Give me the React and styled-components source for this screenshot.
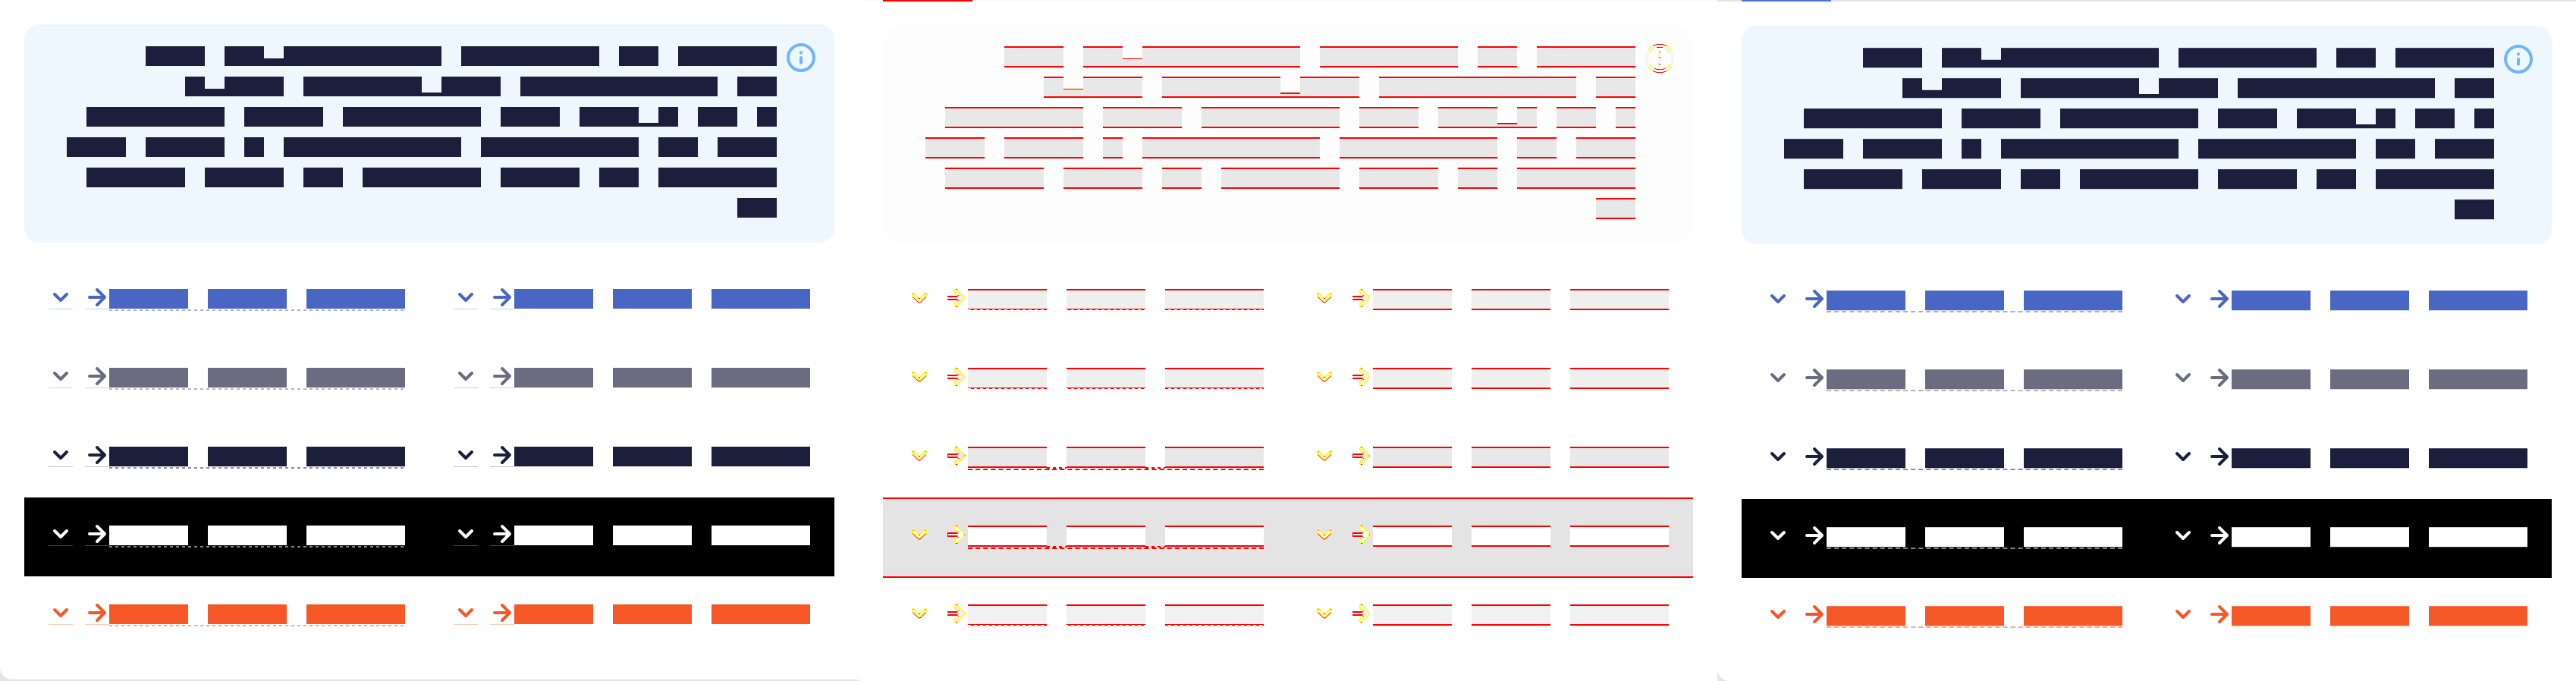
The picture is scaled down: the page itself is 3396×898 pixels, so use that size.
import React from "react";
import styled, { createGlobalStyle, css } from "styled-components";

const Base = createGlobalStyle`
  body { margin: 0; background: #ffffff; font-family: "Liberation Sans", sans-serif; }
`;

const Page = styled.main`
  display: grid;
  grid-template-columns: repeat(3, 1fr);
`;

const Pane = styled.section`
  background: ${(p) => (p.$kind === "diff" ? "#fbfbfb" : "#e4e4e4")};
`;

const TopLine = styled.div`
  height: 2px;
  padding-left: 32px;
  background: ${(p) => (p.$kind === "before" ? "#ffffff" : "transparent")};
`;

const Progress = styled.div`
  width: 118px;
  height: 2px;
  background: ${(p) => ({ before: "transparent", diff: "#ff0000", after: "#536dcf" })[p.$kind]};
`;

const Sheet = styled.div`
  background: #ffffff;
  padding: ${(p) => (p.$kind === "before" ? 30 : 32)}px 32px 32px;
  border-bottom-left-radius: 16px;
`;

const Notice = styled.div`
  display: flex;
  justify-content: flex-end;
  align-items: flex-start;
  gap: 12px;
  min-height: 240px;
  padding: 24px;
  margin-bottom: 24px;
  border-radius: 20px;
  background: ${(p) => (p.$kind === "diff" ? "#fdfdfd" : "#eef6fe")};
`;

const Lines = styled.div`
  display: flex;
  flex-direction: column;
  align-items: flex-end;
  gap: ${(p) => ({ before: 14, diff: 12, after: 13 })[p.$kind]}px;
  padding-top: ${(p) => (p.$kind === "diff" ? 3 : 5)}px;
`;

const Line = styled.div`
  display: flex;
  align-items: flex-end;
`;

const edge = {
  before: css``,
  diff: css`
    border: solid #ff0000;
    border-width: 2px 0;
  `,
  after: css`
    border: solid ${(p) => p.$c.bottom};
    border-width: 0 0 1px;
    box-shadow: inset 0 1px ${(p) => p.$c.top};
  `,
};

const Block = styled.span`
  box-sizing: border-box;
  width: ${(p) => p.$n * 26}px;
  height: ${(p) => p.$h + { before: 0, diff: 2, after: 1 }[p.$kind]}px;
  background: ${(p) => p.$c.fill};
  ${(p) => edge[p.$kind]}
  ${(p) =>
    p.$kind === "diff" &&
    p.$h === 10 &&
    css`
      border-top-width: 1px;
      box-shadow: inset 0 1px #ffff00;
    `}
  ${(p) =>
    p.$kind === "after" &&
    p.$h < 26 &&
    css`
      box-shadow: ${p.$h === 10 ? `0 -1px ${p.$c.bottom}` : "none"};
    `}
`;

const Space = styled.span`
  width: 26px;
  height: 2px;
  margin-bottom: -1px;
  background: ${(p) =>
    p.$dashed ? "repeating-linear-gradient(90deg, #ff0000 0 4px, transparent 4px 8px)" : "transparent"};
`;

const Row = styled.div`
  display: grid;
  grid-template-columns: 1fr 1fr;
  min-height: 104px;
  box-sizing: border-box;
  background: ${(p) => p.$bg || "transparent"};
  ${(p) =>
    p.$bg === "#e4e4e4" &&
    css`
      box-shadow: 0 -2px #ff0000, inset 0 -2px #ff0000;
    `}
`;

const Item = styled.div`
  display: flex;
  align-items: flex-start;
  padding: ${(p) => (p.$kind === "diff" ? 35 : 37)}px 0 0 32px;
`;

const IconLink = styled.a`
  display: block;
  width: 32px;
  height: 26px;
  margin-right: ${(p) => (p.$spaced ? 16 : 0)}px;
  border-bottom: ${(p) => (p.$kind === "before" ? `1px solid ${p.$line}` : "none")};
`;

const Icon = styled.svg`
  display: block;
  overflow: visible;
  fill: none;
  stroke-linecap: round;
  stroke-linejoin: round;
`;

const Label = styled.a`
  display: flex;
  position: relative;
`;

const Dashes = styled.span`
  position: absolute;
  left: 0;
  right: 0;
  top: ${(p) => (p.$kind === "diff" ? 29 : 27)}px;
  ${(p) =>
    p.$kind === "before"
      ? css`
          height: 2px;
          background: repeating-linear-gradient(90deg, ${p.$color} 0 4px, transparent 4px 8px);
        `
      : css`
          border-bottom: 2px dashed ${p.$color};
        `}
`;

/* breaks the last pixel row of the red edge into dashes */
const Notches = styled.span`
  position: absolute;
  left: 0;
  right: 0;
  top: 27px;
  height: 1px;
  background: repeating-linear-gradient(90deg, #ffffff 0 4px, transparent 4px 8px);
`;

/* each character is one 26px cell: X full, a low block, p descender */
const paragraph = [
  "XXX XXaXXXXXXXX XXXXXXX XX XXXXX",
  "XaXXX XXXXXXpXXX XXXXXXXXXX XX",
  "XXXXXXX XXXX XXXXXXX XXX XXXpX XX X",
  "XXX XXXX X XXXXXXXXX XXXXXXXX XX XXX",
  "XXXXX XXXX XX XXXXXX XXXX XX XXXXXX",
  "XX",
];
const heights = { X: 26, a: 10, p: 5 };
const ink = { fill: "#1b1f3b", top: "#3f4560", bottom: "#c0c8da" };

const themes = [
  { fill: "#4a66c4", line: "#c9d0ec", dash: "#a4b2e1", top: "#6d84cf", bottom: "#d3daf1", diff: "#efefef", diffDash: "#f7f7f7" },
  { fill: "#6b6c7f", line: "#d2d2d8", dash: "#b4b5bf", top: "#8a8b9a", bottom: "#dcdce1", diff: "#efefef", diffDash: "#f7f7f7" },
  { fill: "#1b1f3b", line: "#bbbcc4", dash: "#8d8f9d", top: "#494c63", bottom: "#c8c9cf", diff: "#e8e8e8", diffDash: "#ff0000", strong: true },
  { fill: "#ffffff", line: "#444444", dash: "#808080", top: "#d0d0d0", bottom: "#363636", diff: "#ffffff", diffDash: "#ff0000", strong: true, dark: true },
  { fill: "#f55727", line: "#fccdbe", dash: "#faab93", top: "#f77a54", bottom: "#fdd5c9", diff: "#f1f1f1", diffDash: "#f8f8f8" },
];

function Text({ cells, kind, color, dashed }) {
  const runs = cells.match(/X+|a+|p+| +/g);
  return (
    <Line>
      {runs.map((r, i) =>
        r[0] === " " ? (
          <Space key={i} $dashed={dashed} />
        ) : (
          <Block key={i} $n={r.length} $h={heights[r[0]]} $kind={kind} $c={color} />
        )
      )}
    </Line>
  );
}

function InfoIcon({ kind }) {
  if (kind === "diff") {
    return (
      <Icon width="40" height="40" role="img" aria-label="Information">
        <g stroke="#f5f5f5" strokeWidth="4">
          <circle cx="20" cy="19" r="17" />
          <path d="M20 19v6M20 12.3v.1" />
        </g>
        <g stroke="#ffff00" strokeWidth="1.5" strokeDasharray="3 1" strokeLinecap="butt">
          <path d="M5 8Q8 3 12 2M35 8Q32 3 28 2M5 30Q8 35 12 36M35 30Q32 35 28 36" />
          <path d="M8 11Q10 7 14 6M32 11Q30 7 26 6M8 27Q10 31 14 32M32 27Q30 31 26 32M18 14h4M18 26h4" />
        </g>
        <g stroke="#ff0000" strokeLinecap="butt">
          <path d="M16 .5h8M11 2.5l5-2M24 .5l5 2M16 4.5h8M16 33.5h8M13 32l3 1.5M24 33.5l3-1.5M16 37.5h8M11 35.5l5 2M24 37.5l5-2" />
          <path d="M19 10.5h2M19 17.5h2M19 27.5h2" />
        </g>
      </Icon>
    );
  }
  return (
    <Icon width="40" height="40" stroke="#70b5f9" strokeWidth="4" role="img" aria-label="Information">
      <circle cx="20" cy="20" r="17" />
      <path d="M20 20v6.7M20 13.3v.1" />
    </Icon>
  );
}

function Chevron({ color, diff }) {
  if (diff) {
    return (
      <Icon width="32" height="26">
        <path d="M8 7.5l8 8 8-8" stroke="#ffff00" strokeWidth="5" />
        <path d="M8 7.5l8 8 8-8" stroke={color} strokeWidth="2" />
        <path d="M7 10.5l8 7.500h2l8-7.500M7.500 6.500h1M23.500 6.500h1M15 12.500h2" stroke="#ff0000" strokeLinecap="butt" />
      </Icon>
    );
  }
  return (
    <Icon width="32" height="26" stroke={color} strokeWidth="4">
      <path d="M8 7l8 8 8-8" />
    </Icon>
  );
}

function Arrow({ color, diff, strong }) {
  if (diff) {
    return (
      <Icon width="32" height="26">
        <path d="M16 .5h1l10 10v3l-10 10h-2l-.5-4 4.500-4.500v-6l-4.500-4.500.5-4z" fill={color} stroke="#ffff00" strokeWidth="1.500" />
        <path d="M6 9h14v6H6z" fill={color} />
        <path d="M5 10h13.500M5 14h13.500" stroke="#ff0000" strokeWidth="2" strokeLinecap="butt" />
        <path d="M16 .5h2M16 23.500h2M19 8.500h1M19 15.500h1" stroke="#ff0000" strokeLinecap="butt" />
        {strong && <path d="M5.500 10v4M27.500 11.500v1" stroke="#ff0000" strokeLinecap="butt" />}
      </Icon>
    );
  }
  return (
    <Icon width="32" height="26" stroke={color} strokeWidth="4">
      <path d="M6 11h19M16 1l10 10-10 10" />
    </Icon>
  );
}

function LinkItem({ theme, kind, underlined }) {
  const diff = kind === "diff";
  const color = diff ? { fill: theme.diff } : theme;
  return (
    <Item $kind={kind}>
      <IconLink href="#" $kind={kind} $line={theme.line} $spaced aria-label="Expand">
        <Chevron color={color.fill} diff={diff} />
      </IconLink>
      <IconLink href="#" $kind={kind} $line={theme.line} aria-label="Open">
        <Arrow color={color.fill} diff={diff} strong={theme.strong} />
      </IconLink>
      <Label href="#" aria-label="Link">
        <Text cells="XXXX XXXX XXXXX" kind={kind} color={color} dashed={diff && underlined && theme.strong} />
        {underlined && diff && !theme.strong && <Notches />}
        {underlined && <Dashes $kind={kind} $color={diff ? theme.diffDash : theme.dash} />}
      </Label>
    </Item>
  );
}

function View({ kind }) {
  const diff = kind === "diff";
  return (
    <Pane $kind={kind}>
      <TopLine $kind={kind}>
        <Progress $kind={kind} />
      </TopLine>
      <Sheet $kind={kind}>
        <Notice $kind={kind}>
          <Lines $kind={kind}>
            {paragraph.map((l) => (
              <Text key={l} cells={l} kind={kind} color={diff ? { fill: "#e8e8e8" } : ink} />
            ))}
          </Lines>
          <InfoIcon kind={kind} />
        </Notice>
        {themes.map((t) => (
          <Row key={t.fill} $bg={t.dark ? (diff ? "#e4e4e4" : "#000000") : undefined}>
            <LinkItem theme={t} kind={kind} underlined />
            <LinkItem theme={t} kind={kind} />
          </Row>
        ))}
      </Sheet>
    </Pane>
  );
}

export default function App() {
  return (
    <Page>
      <Base />
      <View kind="before" />
      <View kind="diff" />
      <View kind="after" />
    </Page>
  );
}
